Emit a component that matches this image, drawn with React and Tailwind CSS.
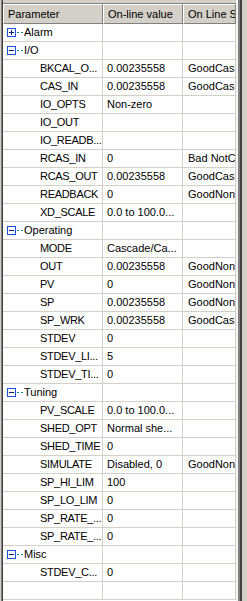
import React from "react";

const rows = [
  { group: "Alarm", open: false },
  { group: "I/O", open: true },
  { name: "BKCAL_O...", value: "0.00235558", status: "GoodCas" },
  { name: "CAS_IN", value: "0.00235558", status: "GoodCas" },
  { name: "IO_OPTS", value: "Non-zero", status: "" },
  { name: "IO_OUT", value: "", status: "" },
  { name: "IO_READB...", value: "", status: "" },
  { name: "RCAS_IN", value: "0", status: "Bad NotC" },
  { name: "RCAS_OUT", value: "0.00235558", status: "GoodCas" },
  { name: "READBACK", value: "0", status: "GoodNon" },
  { name: "XD_SCALE", value: "0.0 to 100.0...", status: "" },
  { group: "Operating", open: true },
  { name: "MODE", value: "Cascade/Ca...", status: "" },
  { name: "OUT", value: "0.00235558", status: "GoodNon" },
  { name: "PV", value: "0", status: "GoodNon" },
  { name: "SP", value: "0.00235558", status: "GoodNon" },
  { name: "SP_WRK", value: "0.00235558", status: "GoodCas" },
  { name: "STDEV", value: "0", status: "" },
  { name: "STDEV_LI...", value: "5", status: "" },
  { name: "STDEV_TI...", value: "0", status: "" },
  { group: "Tuning", open: true },
  { name: "PV_SCALE", value: "0.0 to 100.0...", status: "" },
  { name: "SHED_OPT", value: "Normal she...", status: "" },
  { name: "SHED_TIME", value: "0", status: "" },
  { name: "SIMULATE", value: "Disabled, 0", status: "GoodNon" },
  { name: "SP_HI_LIM", value: "100", status: "" },
  { name: "SP_LO_LIM", value: "0", status: "" },
  { name: "SP_RATE_...", value: "0", status: "" },
  { name: "SP_RATE_...", value: "0", status: "" },
  { group: "Misc", open: true },
  { name: "STDEV_C...", value: "0", status: "" },
  { name: "", value: "", status: "" },
];

// tree expander: blue box with +/- and a dotted teal stub
const Expander = ({ open }) => (
  <svg width="17" height="9" viewBox="0 0 17 9" className="shrink-0">
    <rect x="0.5" y="0.5" width="8" height="8" fill="#fff" stroke="#1a4fe0" />
    <rect x="2" y="4" width="5" height="1" fill="#0a1f80" />
    {!open && <rect x="4" y="2" width="1" height="5" fill="#0a1f80" />}
    <rect x="10" y="4" width="2" height="1" fill="#008c8c" />
    <rect x="14" y="4" width="2" height="1" fill="#008c8c" />
  </svg>
);

const HeaderCell = ({ label, w }) => (
  <div
    className={`${w} h-full shrink-0 overflow-hidden whitespace-nowrap bg-[#d4d0c8] border-t border-l border-t-white border-l-white border-r border-b border-r-[#808080] border-b-[#808080] pl-[4px] flex items-center`}
  >
    {label}
  </div>
);

export default function App() {
  return (
    <div
      className="w-[247px] h-[601px] overflow-hidden bg-[#d4d0c8] flex text-[11px] text-black"
      style={{ fontFamily: '"Liberation Sans", Arial, sans-serif' }}
    >
      {/* sunken left edge */}
      <div className="w-[1px] shrink-0" />
      <div className="w-[1px] shrink-0 bg-[#808080]" />
      <div className="w-[1px] shrink-0 bg-[#404040]" />

      <div className="flex flex-col w-[233px] shrink-0">
        <div className="h-[3px] shrink-0" />
        <div className="h-[1px] shrink-0 bg-[#808080]" />
        {/* column headers */}
        <div className="flex h-[20px] shrink-0">
          <HeaderCell label="Parameter" w="w-[100px]" />
          <HeaderCell label="On-line value" w="w-[80px]" />
          <HeaderCell label="On Line Status" w="w-[53px]" />
        </div>

        <div className="flex-1 bg-white">
          {rows.map((r, i) => (
            <div key={i} className="flex h-[18px] border-b border-[#d4d0c8]">
              <div className="w-[100px] shrink-0 border-r border-[#d4d0c8] flex items-center overflow-hidden whitespace-nowrap">
                {r.group ? (
                  <div className="flex items-center pl-[4px]">
                    <Expander open={r.open} />
                    <span>{r.group}</span>
                  </div>
                ) : (
                  <span className="pl-[37px] tracking-[-0.3px]">{r.name}</span>
                )}
              </div>
              <div className="w-[80px] shrink-0 border-r border-[#d4d0c8] flex items-center pl-[4px] overflow-hidden whitespace-nowrap">
                {r.value}
              </div>
              <div className="w-[53px] shrink-0 border-r border-[#d4d0c8] flex items-center pl-[5px] overflow-hidden whitespace-nowrap">
                {r.status}
              </div>
            </div>
          ))}
        </div>
      </div>

      {/* frame on the right */}
      <div className="w-[2px] shrink-0 bg-[#f4f4f4]" />
      <div className="w-[2px] shrink-0 bg-[#808080]" />
      <div className="w-[2px] shrink-0 bg-[#404040]" />
      <div className="flex-1" />
    </div>
  );
}
